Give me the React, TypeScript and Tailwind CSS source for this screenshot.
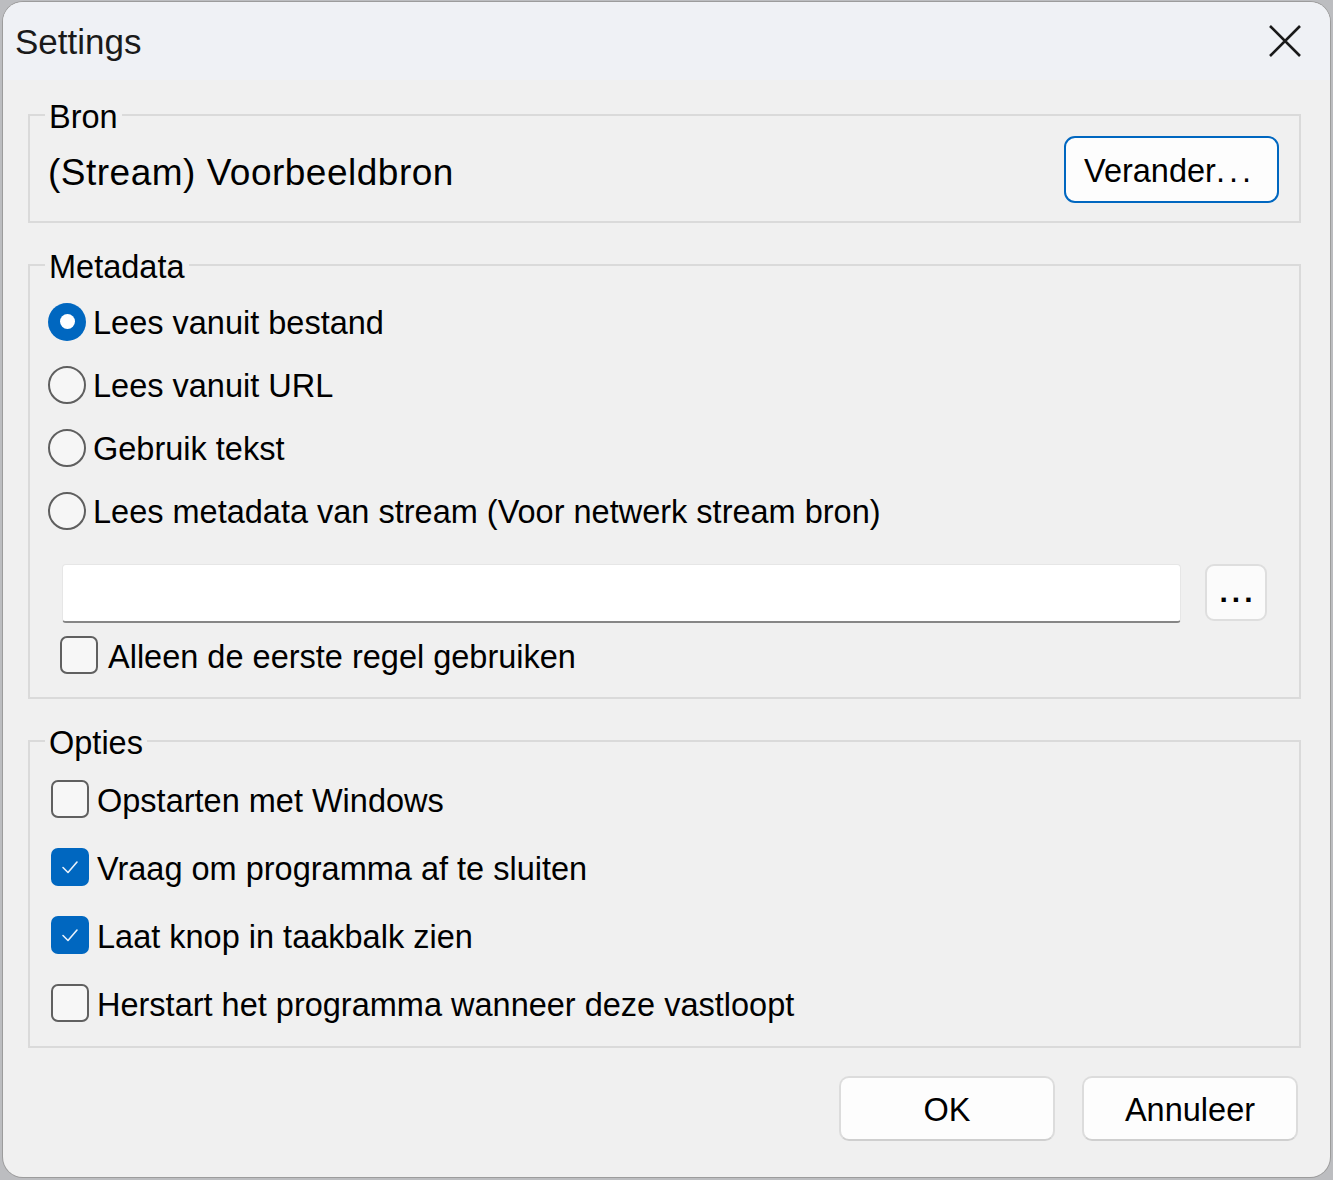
import { useState } from "react";

const font = { fontFamily: '"Liberation Sans", Arial, sans-serif' };

function Radio({
  checked,
  label,
  onSelect,
}: {
  checked: boolean;
  label: string;
  onSelect: () => void;
}) {
  return (
    <div className="flex h-[63px] items-center gap-[7px]" onClick={onSelect}>
      {checked ? (
        <span className="flex h-[38px] w-[38px] items-center justify-center rounded-full bg-[#0067c0]">
          <span className="h-[15px] w-[15px] rounded-full bg-white" />
        </span>
      ) : (
        <span className="h-[38px] w-[38px] rounded-full border-2 border-[#5f5f5f] bg-[#f6f6f6]" />
      )}
      <span className="pt-[4px] text-[32.5px] leading-none text-black">{label}</span>
    </div>
  );
}

function CheckBox({ checked }: { checked: boolean }) {
  if (checked) {
    return (
      <span className="flex h-[38px] w-[38px] items-center justify-center rounded-[7px] bg-[#0067c0]">
        <svg width="22" height="22" viewBox="0 0 22 22" fill="none">
          <path d="M4 11.5l5 5L18 6" stroke="#e8f1fb" strokeWidth="1.6" strokeLinecap="round" strokeLinejoin="round" />
        </svg>
      </span>
    );
  }
  return <span className="h-[38px] w-[38px] rounded-[7px] border-2 border-[#606060] bg-[#f7f7f7]" />;
}

function Group({
  title,
  className,
  children,
}: {
  title: string;
  className: string;
  children: React.ReactNode;
}) {
  return (
    <fieldset className={`mx-[25px] w-[1273px] border-2 border-[#dadada] pl-[18px] pr-[20px] ${className}`}>
      <legend className="ml-[-3px] px-[4px] pt-[4px] text-[32.5px] leading-[32px] text-black">{title}</legend>
      {children}
    </fieldset>
  );
}

export default function App() {
  const [source, setSource] = useState(0);
  const [opts] = useState([false, true, true, false]);

  const sources = [
    "Lees vanuit bestand",
    "Lees vanuit URL",
    "Gebruik tekst",
    "Lees metadata van stream (Voor netwerk stream bron)",
  ];
  const options = [
    "Opstarten met Windows",
    "Vraag om programma af te sluiten",
    "Laat knop in taakbalk zien",
    "Herstart het programma wanneer deze vastloopt",
  ];

  return (
    <div className="h-[1180px] w-[1333px] bg-[#bcbdc0] pl-[3px] pt-[2px]" style={font}>
      <div className="flex h-[1175px] w-[1327px] flex-col overflow-hidden rounded-[20px] bg-[#f0f0f0] shadow-[0_0_0_1px_#9c9c9c]">
        {/* title bar */}
        <div className="flex h-[78px] shrink-0 items-center justify-between bg-[#eff1f5] pl-[12px] pr-[28px]">
          <span className="text-[35px] leading-none text-[#1a1a1a]">Settings</span>
          <svg width="34" height="34" viewBox="0 0 34 34">
            <path d="M2 2L32 32M32 2L2 32" stroke="#1a1a1a" strokeWidth="2.6" />
          </svg>
        </div>

        {/* source */}
        <Group title="Bron" className="mt-[17px] pb-[18px]">
          <div className="mt-[3px] flex items-center justify-between">
            <span className="pt-[5px] text-[37px] leading-none tracking-[0.5px] text-black">(Stream) Voorbeeldbron</span>
            <button className="h-[67px] w-[215px] rounded-[11px] border-2 border-[#0067c0] bg-[#fdfdfd] pt-[3px] pr-[4px] text-[32.5px] text-black">
              Verander<span className="tracking-[4px]">...</span>
            </button>
          </div>
        </Group>

        {/* metadata */}
        <Group title="Metadata" className="mt-[24px] pb-[22px]">
          <div className="mt-[7px] flex flex-col">
            {sources.map((s, i) => (
              <Radio key={s} label={s} checked={source === i} onSelect={() => setSource(i)} />
            ))}
          </div>
          <div className="ml-[14px] mr-[12px] mt-[22px] flex items-start justify-between">
            <div className="h-[59px] w-[1119px] rounded-[4px] border border-b-2 border-[#e6e6e6] border-b-[#868686] bg-white" />
            <button className="flex h-[57px] w-[62px] items-center justify-center rounded-[9px] border-2 border-[#dedede] bg-[#fbfbfb] pb-[2px] pl-[4px] text-[30px] font-bold leading-none tracking-[4px] text-black">
              ...
            </button>
          </div>
          <div className="ml-[12px] mt-[12px] flex h-[40px] items-center gap-[10px]">
            <CheckBox checked={false} />
            <span className="pt-[4px] text-[32.5px] leading-none text-black">Alleen de eerste regel gebruiken</span>
          </div>
        </Group>

        {/* options */}
        <Group title="Opties" className="mt-[24px] pb-[9px]">
          <div className="ml-[3px] mt-[6px] flex flex-col">
            {options.map((o, i) => (
              <div key={o} className="flex h-[68px] items-center gap-[8px]">
                <CheckBox checked={opts[i]} />
                <span className="pt-[4px] text-[32.5px] leading-none text-black">{o}</span>
              </div>
            ))}
          </div>
        </Group>

        {/* dialog buttons */}
        <div className="mr-[32px] mt-[28px] flex justify-end gap-[27px]">
          <button className="h-[65px] w-[216px] rounded-[10px] border-2 border-[#dcdcdc] border-b-[#cfcfcf] bg-[#fdfdfd] pt-[3px] text-[32.5px] text-black">
            OK
          </button>
          <button className="h-[65px] w-[216px] rounded-[10px] border-2 border-[#dcdcdc] border-b-[#cfcfcf] bg-[#fdfdfd] pt-[3px] text-[32.5px] text-black">
            Annuleer
          </button>
        </div>
      </div>
    </div>
  );
}
